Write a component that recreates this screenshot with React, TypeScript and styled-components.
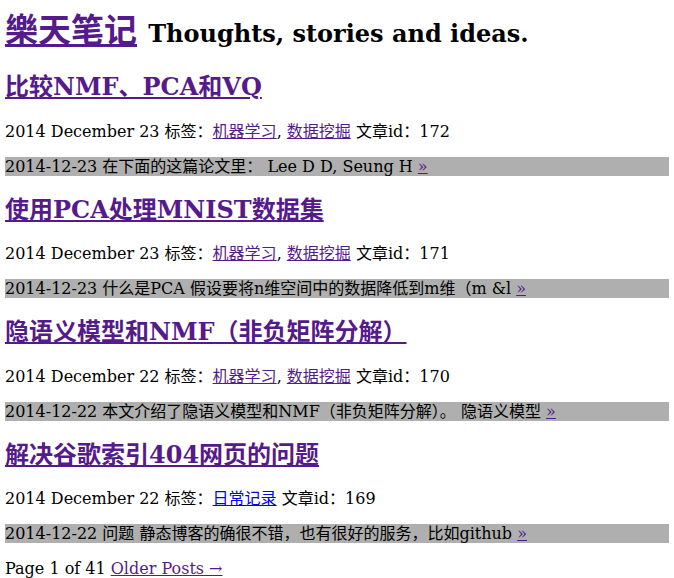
import React from "react";
import styled, { createGlobalStyle } from "styled-components";

const Global = createGlobalStyle`
  html, body { background: #fff; }
  body {
    margin: 0 5px;
    padding: 0;
    font-family: "DejaVu Serif", "Noto Sans CJK SC", serif;
    font-size: 16px;
    color: #000;
  }
  a { color: #551a8b; }
`;

const Header = styled.header`
  display: block;
  padding-top: 12px;
`;

const SiteTitle = styled.h1`
  margin: 0 0 21px;
  font-size: 32px;
  font-weight: bold;
  line-height: 37px;
`;

const SiteLink = styled.a`
  font-size: 33px;
`;

const Tagline = styled.span`
  font-size: 24px;
  color: #000;
`;

const Post = styled.article``;

const PostTitle = styled.h2`
  margin: 20px 0;
  font-size: 24px;
  line-height: 28.5px;
  font-weight: bold;
`;

const Meta = styled.p`
  margin: 16px 0;
  line-height: 19px;
`;

const Summary = styled.p`
  margin: 16px 0;
  line-height: 19px;
  background: #afafaf;
`;

const TagLink = styled.a<{ $fresh?: boolean }>`
  color: ${(p) => (p.$fresh ? "#0000ee" : "#551a8b")};
`;

const Pager = styled.p`
  margin: 16px 0 0;
  line-height: 19px;
`;

type PostData = {
  title: string;
  day: string;
  tags: { name: string; fresh?: boolean }[];
  id: number;
  summary: string;
};

const posts: PostData[] = [
  {
    title: "比较NMF、PCA和VQ",
    day: "23",
    tags: [{ name: "机器学习" }, { name: "数据挖掘" }],
    id: 172,
    summary: "2014-12-23 在下面的这篇论文里： Lee D D, Seung H",
  },
  {
    title: "使用PCA处理MNIST数据集",
    day: "23",
    tags: [{ name: "机器学习" }, { name: "数据挖掘" }],
    id: 171,
    summary: "2014-12-23 什么是PCA 假设要将n维空间中的数据降低到m维（m &l",
  },
  {
    title: "隐语义模型和NMF（非负矩阵分解）",
    day: "22",
    tags: [{ name: "机器学习" }, { name: "数据挖掘" }],
    id: 170,
    summary: "2014-12-22 本文介绍了隐语义模型和NMF（非负矩阵分解）。 隐语义模型",
  },
  {
    title: "解决谷歌索引404网页的问题",
    day: "22",
    tags: [{ name: "日常记录", fresh: true }],
    id: 169,
    summary: "2014-12-22 问题 静态博客的确很不错，也有很好的服务，比如github",
  },
];

export default function App() {
  return (
    <>
      <Global />
      <Header>
        <SiteTitle>
          <SiteLink href="#">樂天笔记</SiteLink> <Tagline>Thoughts, stories and ideas.</Tagline>
        </SiteTitle>
      </Header>
      {posts.map((p) => (
        <Post key={p.id}>
          <PostTitle>
            <a href="#">{p.title}</a>
          </PostTitle>
          <Meta>
            2014 December {p.day} 标签：
            {p.tags.map((t, i) => (
              <React.Fragment key={t.name}>
                {i > 0 && ", "}
                <TagLink href="#" $fresh={t.fresh}>
                  {t.name}
                </TagLink>
              </React.Fragment>
            ))}{" "}
            文章id：{p.id}
          </Meta>
          <Summary>
            {p.summary} <a href="#">»</a>
          </Summary>
        </Post>
      ))}
      <Pager>
        Page 1 of 41 <a href="#">Older Posts →</a>
      </Pager>
    </>
  );
}
